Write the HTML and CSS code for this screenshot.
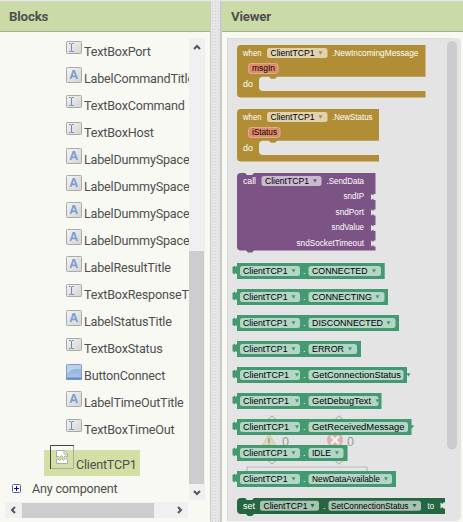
FILE: index.html
```html
<!DOCTYPE html>
<html lang="en">
<head>
<meta charset="utf-8">
<title>Blocks editor</title>
<link rel="stylesheet" href="styles.css">
</head>
<body>
<svg class="defs" aria-hidden="true">
  <defs>
    <linearGradient id="grey" x1="0" y1="0" x2="1" y2="1"><stop offset="0" stop-color="#f4f4f4"/><stop offset="1" stop-color="#d3d3d3"/></linearGradient>
    <linearGradient id="blue" x1="0" y1="0" x2="0" y2="1"><stop offset="0" stop-color="#8aaed8"/><stop offset="1" stop-color="#adc6e6"/></linearGradient>
    <symbol id="textbox" viewBox="0 0 16 16"><rect x=".5" y="1.5" width="15" height="12" rx=".8" fill="url(#grey)" stroke="#aaa"/><path d="M3 3.500h1.500l1 .7 1-.7H8M5.500 4v7.500M3 11.500h1.500l1-.7 1 .7H8" fill="none" stroke="#7189b5"/></symbol>
    <symbol id="label" viewBox="0 0 16 16"><rect x=".5" y=".5" width="15" height="15" rx=".8" fill="url(#grey)" stroke="#aaa"/><path d="M4.500 12 7.300 4h1L11.200 12M5.500 9.300h4.700" fill="none" stroke="#7c9fd3" stroke-width="1.800"/></symbol>
    <symbol id="button" viewBox="0 0 16 16"><rect x=".5" y=".5" width="15" height="15" rx="1" fill="url(#blue)" stroke="#7b9dcc"/><path d="M1 1h14v4Q5 4 1 10z" fill="#d3e2f3" opacity=".65"/><path d="M0 14.500h16" stroke="#5f8dcb" stroke-width="2"/></symbol>
    <symbol id="left" viewBox="0 0 8 8"><path d="M6 1 3 4l3 3" fill="none" stroke="#555" stroke-width="2"/></symbol>
  </defs>
</svg>
<main class="app">
  <section class="panel blocks">
    <h2 class="heading">Blocks</h2>
    <div class="browser">
      <div class="upper">
        <div class="tree">
          <div class="row"><svg class="icon"><use href="#textbox"/></svg><span>TextBoxPort</span></div>
          <div class="row"><svg class="icon"><use href="#label"/></svg><span>LabelCommandTitle</span></div>
          <div class="row"><svg class="icon"><use href="#textbox"/></svg><span>TextBoxCommand</span></div>
          <div class="row"><svg class="icon"><use href="#textbox"/></svg><span>TextBoxHost</span></div>
          <div class="row"><svg class="icon"><use href="#label"/></svg><span>LabelDummySpace</span></div>
          <div class="row"><svg class="icon"><use href="#label"/></svg><span>LabelDummySpace</span></div>
          <div class="row"><svg class="icon"><use href="#label"/></svg><span>LabelDummySpace</span></div>
          <div class="row"><svg class="icon"><use href="#label"/></svg><span>LabelDummySpace</span></div>
          <div class="row"><svg class="icon"><use href="#label"/></svg><span>LabelResultTitle</span></div>
          <div class="row"><svg class="icon"><use href="#textbox"/></svg><span>TextBoxResponseT</span></div>
          <div class="row"><svg class="icon"><use href="#label"/></svg><span>LabelStatusTitle</span></div>
          <div class="row"><svg class="icon"><use href="#textbox"/></svg><span>TextBoxStatus</span></div>
          <div class="row"><svg class="icon"><use href="#button"/></svg><span>ButtonConnect</span></div>
          <div class="row"><svg class="icon"><use href="#label"/></svg><span>LabelTimeOutTitle</span></div>
          <div class="row"><svg class="icon"><use href="#textbox"/></svg><span>TextBoxTimeOut</span></div>
          <div class="selected">
            <svg class="missing" viewBox="0 0 24 24"><path d="M.5 24V.5H24" fill="none" stroke="#444"/><path d="M23.500 1v22.500H1" fill="none" stroke="#aaa"/><path d="M6.500 12V5.500h8l3 3V12l-2-1.500-2 2-2-2-2 2-1.500-1.500zM6.500 14.500v4h11v-4l-2-1-2 2-2-2-2 2-1.500-1.500z" fill="#fff" stroke="#aaa"/><path d="M14 5.500v3.500h3.500" fill="none" stroke="#aaa"/></svg>
            <span>ClientTCP1</span>
          </div>
          <div class="any"><svg class="plus" viewBox="0 0 9 9"><rect x=".5" y=".5" width="8" height="8" rx="1" fill="#fff" stroke="#555f9c"/><path d="M2 4.500h5M4.500 2v5" stroke="#0000c8"/></svg><span>Any component</span></div>
        </div>
        <div class="vbar">
          <svg class="arrow up"><use href="#left"/></svg>
          <div class="vthumb"></div>
          <svg class="arrow down"><use href="#left"/></svg>
        </div>
      </div>
      <div class="hbar">
        <svg class="arrow"><use href="#left"/></svg>
        <div class="hthumb"></div>
        <svg class="arrow right"><use href="#left"/></svg>
      </div>
    </div>
  </section>
  <div class="gutter"></div>
  <section class="panel viewer">
    <h2 class="heading">Viewer</h2>
    <div class="workspace"><svg id="canvas" class="canvas" viewBox="227 38 236 484"></svg></div>
  </section>
</main>
<script src="blocks.js"></script>
</body>
</html>
```
FILE: styles.css
```css
* { box-sizing: border-box; }
body { margin: 0; width: 463px; height: 522px; overflow: hidden; background: #e6e6e6; color: #4f4f4f; font: 12.6px/15px Roboto, sans-serif; letter-spacing: -.2px; }
.defs { position: absolute; width: 0; height: 0; }
.app { display: flex; height: 522px; padding-top: 1px; }
.panel { background: #f8f9f3; display: flex; flex-direction: column; border-top: 1px solid #d3d8c8; }
.blocks { width: 211px; border-right: 1px solid #ccc; }
.gutter { width: 10px; background: #e6e6e6 radial-gradient(#d2d2d2 .7px, transparent .8px) 0 0 / 3px 3px; border-right: 1px solid #c8c8c8; }
.viewer { width: 242px; border-left: 1px solid #ccc; }
.heading { margin: 0; height: 30px; flex: none; background: #cbdba8; border-bottom: 1px solid #a9ad9f; color: #505050; font-size: 13.3px; line-height: 29px; padding-left: 9px; }
.browser { padding: 6px 5px 0; }
.upper { display: flex; justify-content: space-between; width: 200px; height: 462px; }
.tree { width: 184px; overflow: hidden; white-space: nowrap; }
.row { height: 27px; display: flex; align-items: flex-start; padding: 2px 0 0 61px; gap: 2px; }
.row span { padding-top: 4px; }
.icon { width: 16px; height: 16px; flex: none; }
.selected { display: flex; width: 96px; height: 26px; margin: 7px 0 0 39px; padding-left: 6px; gap: 2px; background: #d2dfa5; }
.selected span { padding-top: 7px; }
.missing { width: 24px; height: 24px; margin-top: -5px; flex: none; }
.any { display: flex; align-items: center; gap: 11px; height: 16px; margin: 4px 0 0 7px; }
.plus { width: 9px; height: 9px; }
.vbar { width: 16px; background: #f0f0f0; display: flex; flex-direction: column; align-items: center; }
.vthumb { width: 15px; height: 233px; margin: 200px auto 5px 0; background: #cdcdcd; }
.arrow { width: 8px; height: 8px; flex: none; }
.up { transform: rotate(90deg); margin-top: 5px; }
.down { transform: rotate(-90deg); }
.right { transform: rotate(180deg); }
.hbar { width: 183px; height: 16px; margin-top: 2px; background: #f0f0f0; display: flex; align-items: center; padding: 0 4px; }
.hthumb { width: 132px; height: 15px; margin: 0 auto 0 5px; background: #cdcdcd; }
.workspace { padding: 6px 0 0 5px; }
.canvas { display: block; width: 236px; height: 484px; font-family: "Liberation Sans", Arial, sans-serif; font-size: 9.2px; letter-spacing: 0; }
.on { fill: #fff; }
.field { fill: #000; }
.count { fill: #999; font-size: 12px; }
```
FILE: blocks.js
```javascript
const GOLD = '#b18e35', PURPLE = '#7c5385', GREEN = '#439970', DARK = '#266643';
let out = '';

const path = (d, fill, extra = '') => { out += `<path d="${d}" fill="${fill}" ${extra}/>`; };
const text = (s, x1, x2, y, cls) => {
  out += `<text class="${cls}" x="${x1}" y="${y}" textLength="${x2 - x1}" lengthAdjust="spacingAndGlyphs">${s}</text>`;
};
const field = (x1, x2, y, h = 10, fill = '#fff', opacity = 0.6, stroke = 'none') => {
  out += `<rect x="${x1}" y="${y}" width="${x2 - x1}" height="${h}" rx="2.5" fill="${fill}" fill-opacity="${opacity}" stroke="${stroke}"/>`;
};
const arrow = (x, y, fill) => path(`M${x - 2} ${y - 1.5}h4l-2 3.500z`, fill);
const dot = (x, y) => { out += `<text class="on" x="${x}" y="${y}">.</text>`; };

// Flyout background and its scrollbar
path('M227 38H457Q461 38 461 43V515Q461 521 455 521H227z', '#e4e4e4');
path('M227.500 521V38.500H450', 'none', 'stroke="#d8d8d8"');
out += '<rect x="447" y="41" width="10" height="408.500" rx="5" fill="#ccc"/>';

// Warning counters showing through the flyout
path('M269 434 277.500 448H261z', '#ddd9b4', 'stroke="#cbc8ad"');
path('M269 438v5M269 444.500v1.500', 'none', 'stroke="#999" stroke-width="1.500"');
out += '<circle cx="335" cy="440" r="8" fill="#dfb0b0"/>';
path('M331 436l8 8M339 436l-8 8', 'none', 'stroke="#eee" stroke-width="2.500"');
text('0', 282, 289, 446, 'count');
text('0', 347, 354, 446, 'count');
path('M268.500 419l3.500-3 3.500 3M335.500 419l3.500-3 3.500 3M268.500 461l3.500 3 3.500-3M335.500 461l3.500 3 3.500-3M247 475v-8h120v8M343 458l5-4', 'none', 'stroke="#bbb" stroke-width="1.200"');

// Event handlers
function eventBlock(y, right, event, eventEnd, param, paramEnd) {
  path(`M241 ${y}H${right}V${y + 31.7}H277l-2 2h-4l-2-2H263Q259 ${y + 31.7} 259 ${y + 35.7}V${y + 42}Q259 ${y + 46} 263 ${y + 46}H${right}V${y + 52.6}H241Q237 ${y + 52.6} 237 ${y + 48.6}V${y + 4}Q237 ${y} 241 ${y}z`, GOLD);
  text('when', 243, 261.5, y + 10.800, 'on');
  field(267, 327.5, y + 3);
  text('ClientTCP1', 270.5, 314.5, y + 10.800, 'field');
  arrow(320.5, y + 7.700, GOLD);
  text(event, 332, eventEnd, y + 10.800, 'on');
  field(248.5, paramEnd + 3, y + 18.500, 10, '#df8c6c', 1, '#e7a986');
  text(param, 252, paramEnd, y + 26, 'field');
  text('do', 243, 253, y + 42, 'on');
}
eventBlock(45, 425.500, '.NewIncomingMessage', 418.500, 'msgIn', 275);
eventBlock(109, 379, '.NewStatus', 372.500, 'iStatus', 277);

// Method call
const socket = y => `V${y - 3}h-2v1.500l-2.500-1.500v6l2.500-1.500v1.500h2`;
path(`M241 173H245l2 2h5l2-2H375.500${[197, 212.5, 228, 243.5].map(socket).join('')}V250.500H254l-2 2h-4l-2-2H241Q237 250.500 237 246.500V177Q237 173 241 173z`, PURPLE);
text('call', 243, 256, 183.8, 'on');
field(261.5, 321.5, 176);
text('ClientTCP1', 265, 309, 183.8, 'field');
arrow(315, 180.7, PURPLE);
text('.SendData', 326.5, 364, 183.8, 'on');
[['sndIP', 343.5, 199.300], ['sndPort', 335.5, 214.800], ['sndValue', 331.5, 230.300], ['sndSocketTimeout', 296.5, 246]]
  .forEach(([s, x, y]) => text(s, x, 364, y, 'on'));

// Property getters: name, text end, arrow x, field end, block end, component arrow x
[
  ['CONNECTED', 367.5, 374, 381, 384.700, 293.5],
  ['CONNECTING', 372, 377.5, 384.500, 388, 293.5],
  ['DISCONNECTED', 383, 388.5, 395.5, 399, 293.5],
  ['ERROR', 344, 350, 357, 361, 293.5],
  ['GetConnectionStatus', 401, 408.5, 403.5, 407, 297],
  ['GetDebugText', 371, 377.500, 378.5, 381.5, 297],
  ['GetReceivedMessage', 404.5, 412, 408, 411.5, 297],
  ['IDLE', 331, 337, 343.5, 347.5, 293.5],
  ['NewDataAvailable', 380, 386, 392, 396, 293.5]
].forEach(([name, end, tip, fieldEnd, right, tip1], i) => {
  const y = 263 + i * 26;
  path(`M237 ${y}H${right}v16H237v-5l-2-1v1.500l-2.500-1.500v-6l2.500-1.500v1.500l2-1z`, GREEN);
  field(240, 300, y + 3);
  field(308.5, fieldEnd, y + 3);
  text('ClientTCP1', 243, tip1 > 295 ? 289 : 287.5, y + 10.800, 'field');
  arrow(tip1, y + 7.700, GREEN);
  dot(303, y + 10.800);
  text(name, 312, end, y + 10.800, 'field');
  arrow(tip, y + 7.700, GREEN);
});

// Property setter
path(`M241 498H245l2 2h5l2-2H445${socket(505.5)}V514H254l-2 2h-4l-2-2H241Q237 514 237 510V502Q237 498 241 498z`, DARK);
text('set', 243, 255, 508.500, 'on');
field(260, 319, 500.7);
text('ClientTCP1', 263.5, 307.5, 508.500, 'field');
arrow(312.5, 505.400, DARK);
dot(323, 508.500);
field(328.5, 421, 500.7);
text('SetConnectionStatus', 331, 408.5, 508.500, 'field');
arrow(414.5, 505.400, DARK);
text('to', 427.5, 434, 508.500, 'on');

document.getElementById('canvas').innerHTML = out;
```
